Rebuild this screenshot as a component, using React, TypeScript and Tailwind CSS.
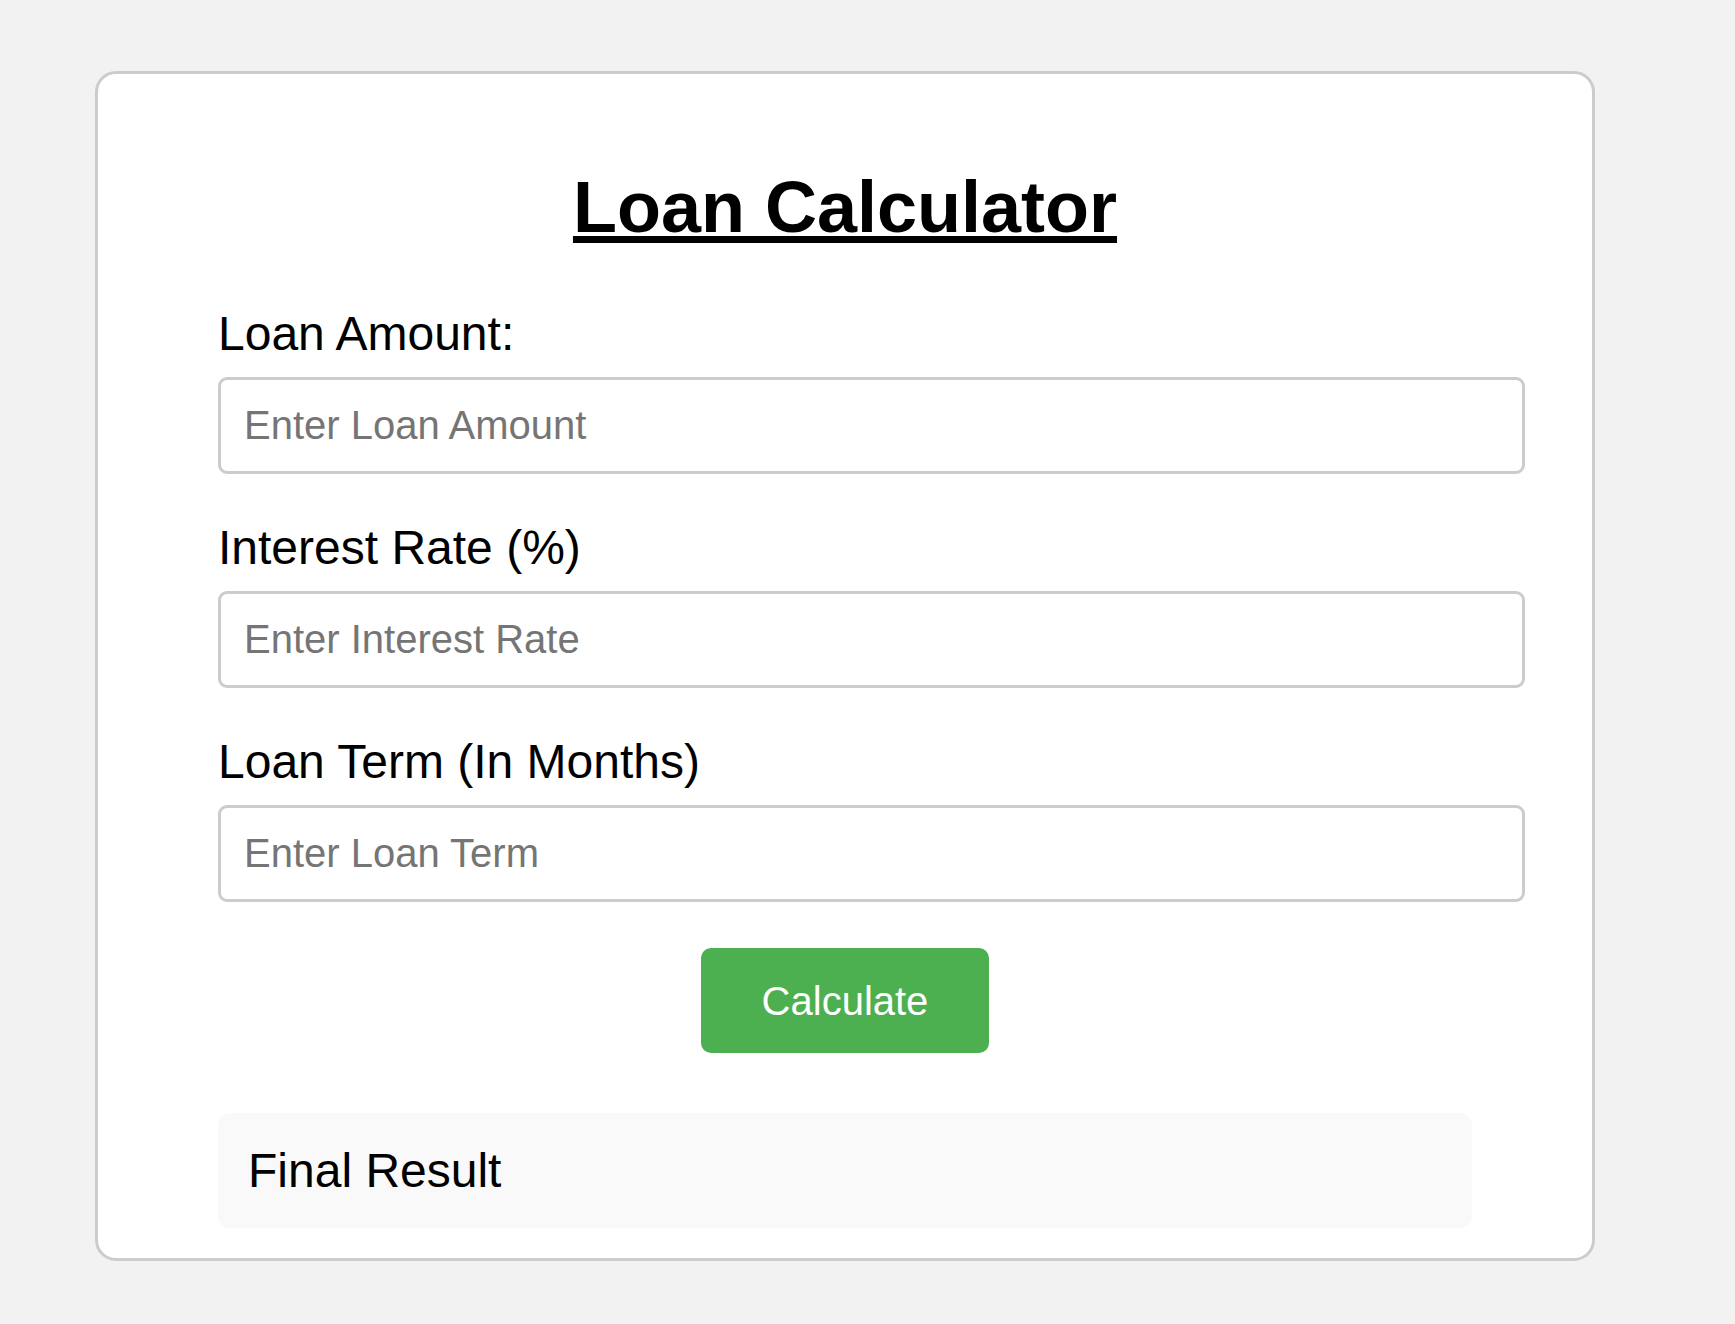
import { useState } from 'react';

const fieldClass =
  'block w-[1307px] h-[97px] px-[23px] border-[3px] border-[#cccccc] rounded-[9px] bg-white text-[40px] text-black outline-none placeholder:text-[#757575]';

export default function App() {
  const [amount, setAmount] = useState('');
  const [rate, setRate] = useState('');
  const [term, setTerm] = useState('');
  const [result, setResult] = useState('Final Result');

  const calculate = () => {
    const p = parseFloat(amount);
    const r = parseFloat(rate) / 100 / 12;
    const n = parseFloat(term);
    if (!p || !n || isNaN(r)) {
      setResult('Final Result');
      return;
    }
    const monthly = r === 0 ? p / n : (p * r) / (1 - Math.pow(1 + r, -n));
    setResult(`Monthly Payment: ${monthly.toFixed(2)}`);
  };

  return (
    <div className="min-h-screen bg-[#f2f2f2] pt-[71px] pl-[95px] font-['Liberation_Sans',Arial,sans-serif] text-black">
      <div className="w-[1500px] bg-white border-[3px] border-[#cccccc] rounded-[21px] px-[120px] pt-[92px] pb-[30px]">
        <h1 className="text-center text-[72px] leading-[83px] font-bold underline">Loan Calculator</h1>

        <label className="block mt-[57px] text-[48px] leading-[55px]">Loan Amount:</label>
        <input
          value={amount}
          onChange={e => setAmount(e.target.value)}
          placeholder="Enter Loan Amount"
          className={`mt-[16px] ${fieldClass}`}
        />

        <label className="block mt-[46px] text-[48px] leading-[55px]">Interest Rate (%)</label>
        <input
          value={rate}
          onChange={e => setRate(e.target.value)}
          placeholder="Enter Interest Rate"
          className={`mt-[16px] ${fieldClass}`}
        />

        <label className="block mt-[46px] text-[48px] leading-[55px]">Loan Term (In Months)</label>
        <input
          value={term}
          onChange={e => setTerm(e.target.value)}
          placeholder="Enter Loan Term"
          className={`mt-[16px] ${fieldClass}`}
        />

        <div className="flex justify-center mt-[46px]">
          <button
            onClick={calculate}
            className="h-[105px] w-[288px] rounded-[10px] bg-[#4caf50] text-white text-[40px] leading-[46px]"
          >
            Calculate
          </button>
        </div>

        <div className="mt-[60px] h-[115px] rounded-[12px] bg-[#f9f9f9] px-[30px] py-[30px] text-[48px] leading-[55px]">
          {result}
        </div>
      </div>
    </div>
  );
}
